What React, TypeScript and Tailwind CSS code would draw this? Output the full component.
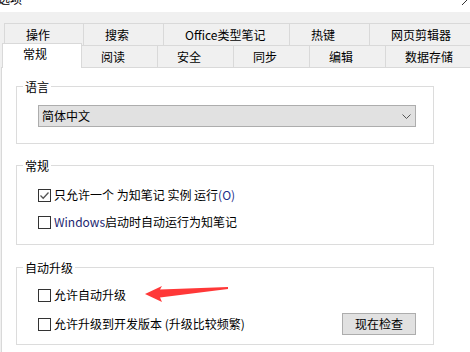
import React from 'react';

// 选项对话框 - 常规页
const row1 = [
  { label: '操作', w: 'w-[80px] border-l' },
  { label: '搜索', w: 'w-[80px]' },
  { label: 'Office类型笔记', w: 'w-[126px]' },
  { label: '热键', w: 'w-[80px]' },
  { label: '网页剪辑器', w: 'w-[120px]' },
];

const row2 = [
  { label: '阅读', w: 'w-[76px]' },
  { label: '安全', w: 'w-[76px]' },
  { label: '同步', w: 'w-[76px]' },
  { label: '编辑', w: 'w-[76px]' },
  { label: '数据存储', w: 'w-[110px]' },
];

const CheckBox: React.FC<{ checked?: boolean }> = ({ checked }) => (
  <span className="w-[13px] h-[13px] border border-[#333333] bg-white flex items-center justify-center shrink-0">
    {checked && (
      <svg width="11" height="11" viewBox="0 0 11 11">
        <path d="M1.5 5.5 L4.2 8.2 L9.5 2.5" fill="none" stroke="#555555" strokeWidth="1.3" />
      </svg>
    )}
  </span>
);

const Group: React.FC<{ title: string; className: string; children: React.ReactNode }> = ({ title, className, children }) => (
  <div className={`relative ml-[14px] w-[418px] border border-[#dcdcdc] ${className}`}>
    <span className="absolute -top-[8px] left-[6px] px-[2px] bg-white leading-[16px]">{title}</span>
    {children}
  </div>
);

const App: React.FC = () => {
  return (
    <div className="relative w-[470px] h-[352px] overflow-hidden bg-[#f0f0f0] text-[12px] text-black font-['Noto_Sans_CJK_SC','Noto_Sans',sans-serif]">
      {/* 标题栏 */}
      <div className="h-[12px] bg-white overflow-hidden flex justify-between">
        <span className="block -mt-[8px] ml-[-2px] leading-[14px]">选项</span>
        <svg width="8" height="8" viewBox="0 0 8 8" className="mr-[1px] -mt-[2px]">
          <path d="M1 7 L7 1" stroke="#333" strokeWidth="1" />
        </svg>
      </div>

      {/* 标签页 第一行 */}
      <div className="flex pl-[4px] mt-[11px]">
        {row1.map((t) => (
          <div key={t.label} className={`${t.w} h-[22px] shrink-0 border-t border-r border-[#d9d9d9] pl-[21px] leading-[22px] whitespace-nowrap`}>
            {t.label}
          </div>
        ))}
      </div>

      {/* 标签页 第二行 */}
      <div className="flex items-start pl-[2px]">
        <div className="relative z-10 w-[80px] h-[25px] -mt-[2px] -mb-[1px] shrink-0 bg-white border-t border-l border-r border-[#d9d9d9] pl-[20px] leading-[20px]">
          常规
        </div>
        {row2.map((t) => (
          <div key={t.label} className={`${t.w} h-[22px] shrink-0 border-t border-r border-[#d9d9d9] pl-[19px] leading-[22px] whitespace-nowrap`}>
            {t.label}
          </div>
        ))}
      </div>

      {/* 内容面板 */}
      <div className="ml-[1px] h-[285px] bg-white border-t border-l border-[#d9d9d9]">
        <Group title="语言" className="mt-[18px] pt-[18px] pb-[16px]">
          <div className="ml-[21px] w-[378px] h-[22px] bg-[#e1e1e1] border border-[#adadad] flex items-center justify-between pl-[3px] pr-[4px] leading-[20px]">
            <span>简体中文</span>
            <svg width="9" height="5" viewBox="0 0 9 5">
              <path d="M0.5 0.5 L4.5 4.5 L8.5 0.5" fill="none" stroke="#555" strokeWidth="1" />
            </svg>
          </div>
        </Group>

        <Group title="常规" className="mt-[21px] pt-[21px] pb-[14px]">
          <div className="flex items-center h-[16px] pl-[21px] leading-[16px]">
            <CheckBox checked />
            <span className="ml-[3px] whitespace-nowrap">
              只允许一个 为知笔记 实例 运行<span className="text-[#1c2f8a]">(O)</span>
            </span>
          </div>
          <div className="flex items-center h-[16px] mt-[11px] pl-[21px] leading-[16px]">
            <CheckBox />
            <span className="ml-[3px] whitespace-nowrap">
              <span className="text-[#1c2670]">Windows</span>启动时自动运行为知笔记
            </span>
          </div>
        </Group>

        <Group title="自动升级" className="mt-[22px] pt-[19px] pb-[9px]">
          <div className="flex items-center h-[16px] pl-[21px] leading-[16px]">
            <CheckBox />
            <span className="ml-[3px] whitespace-nowrap">允许自动升级</span>
          </div>
          <div className="flex items-center justify-between h-[22px] mt-[10px] pl-[21px] pr-[17px]">
            <div className="flex items-center leading-[16px]">
              <CheckBox />
              <span className="ml-[3px] whitespace-nowrap">允许升级到开发版本 (升级比较频繁)</span>
            </div>
            <button className="w-[74px] h-[22px] bg-[#e1e1e1] border border-[#adadad] leading-[20px] text-[12px]">
              现在检查
            </button>
          </div>
        </Group>
      </div>

      {/* 红色箭头标注 */}
      <svg className="absolute left-0 top-0 pointer-events-none" width="470" height="352" viewBox="0 0 470 352">
        <polygon points="145,294 162,286 160,289.5 228,287 228,289 160,297.5 162,302" fill="#ff3838" />
      </svg>
    </div>
  );
};

export default App;
